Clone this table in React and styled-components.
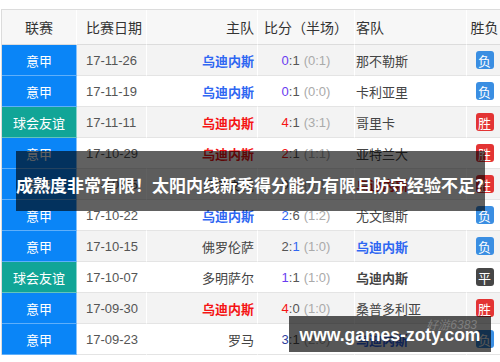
import React from 'react';
import styled, { createGlobalStyle } from 'styled-components';

const COLS = '75px 70px 111px 97px 112px 36px';

const COLORS = {
  serie: '#0a85f7',
  friendly: '#11a597',
  blue: '#2f67f2',
  red: '#f51414',
  purple: '#6a3cf0',
  navy: '#2f3f9e',
  gray: '#444'
};

const RESULT_BG = {
  '胜': '#e33434',
  '负': '#3a8ee2',
  '平': '#464646'
};

const matches = [
  { league: '意甲', date: '17-11-26', home: '乌迪内斯', homeColor: 'blue', score: [['0', 'purple'], [':1']], half: '(0:1)', away: '那不勒斯', result: '负' },
  { league: '意甲', date: '17-11-19', home: '乌迪内斯', homeColor: 'blue', score: [['0', 'purple'], [':1']], half: '(0:0)', away: '卡利亚里', result: '负' },
  { league: '球会友谊', date: '17-11-11', home: '乌迪内斯', homeColor: 'red', score: [['4', 'red'], [':1']], half: '(3:1)', away: '哥里卡', result: '胜' },
  { league: '意甲', date: '17-10-29', home: '乌迪内斯', homeColor: 'red', score: [['2', 'red'], [':1']], half: '(1:1)', away: '亚特兰大', result: '胜' },
  { league: '意甲', date: '17-10-25', home: '贝内文托', score: [['0:'], ['2', 'red']], half: '(0:1)', away: '乌迪内斯', awayColor: 'red', result: '胜' },
  { league: '意甲', date: '17-10-22', home: '乌迪内斯', homeColor: 'blue', score: [['2', 'blue'], [':6']], half: '(1:2)', away: '尤文图斯', result: '负' },
  { league: '意甲', date: '17-10-15', home: '佛罗伦萨', score: [['2:'], ['1', 'blue']], half: '(1:0)', away: '乌迪内斯', awayColor: 'blue', result: '负' },
  { league: '球会友谊', date: '17-10-07', home: '多明萨尔', score: [['1', 'purple'], [':1']], half: '(1:0)', away: '乌迪内斯', awayColor: 'gray', result: '平' },
  { league: '意甲', date: '17-09-30', home: '乌迪内斯', homeColor: 'red', score: [['4', 'red'], [':0']], half: '(1:0)', away: '桑普多利亚', result: '胜' },
  { league: '意甲', date: '17-09-23', home: '罗马', score: [['3', 'navy'], [':1']], half: '(2:0)', away: '乌迪内斯', awayColor: 'blue', result: '负' }
];

const GlobalStyle = createGlobalStyle`
  body {
    margin: 0;
    background: #fff;
    font-family: "Noto Sans CJK SC", "Noto Sans", sans-serif;
  }
`;

const Page = styled.div`
  position: relative;
  width: 500px;
  height: 362px;
  overflow: hidden;
  padding: 9px 0 0 1px;
  box-sizing: border-box;
`;

const Table = styled.div`
  display: flex;
  flex-direction: column;
  width: 502px;
  border-top: 1px solid #dcdcdc;
  border-left: 1px solid #dcdcdc;
`;

const HeaderRow = styled.div`
  display: grid;
  grid-template-columns: ${COLS};
  height: 35px;
  background: #f7f7f7;
`;

const Row = styled.div`
  display: grid;
  grid-template-columns: ${COLS};
  height: 31px;
  background: ${(p) => (p.$alt ? '#f3f3f3' : '#fff')};
`;

const Cell = styled.div`
  display: flex;
  align-items: center;
  justify-content: ${(p) => p.$align || 'center'};
  padding: 0 ${(p) => p.$pad || 0}px;
  border-right: 1px solid #fff;
  border-bottom: 1px solid #e4e4e4;
  font-size: 13px;
  color: #555;
  white-space: nowrap;
  overflow: hidden;
`;

const HeadCell = styled(Cell)`
  font-size: 14px;
  color: #333;
  border-bottom-color: #dcdcdc;
`;

const LeagueCell = styled(Cell)`
  background: ${(p) => COLORS[p.$kind]};
  color: #fff;
  border-bottom-color: rgba(255, 255, 255, 0.35);
  border-right-color: rgba(255, 255, 255, 0.5);
`;

const Team = styled.span`
  color: ${(p) => (p.$color ? COLORS[p.$color] : '#444')};
  font-weight: ${(p) => (p.$color ? 700 : 400)};
`;

const Score = styled.span`
  color: #555;
  font-family: "Liberation Sans", "Noto Sans", sans-serif;
  font-size: 13px;
`;

const Digit = styled.span`
  color: ${(p) => (p.$color ? COLORS[p.$color] : '#555')};
`;

const Half = styled.span`
  color: #aaa;
  margin-left: 4px;
`;

const DateText = styled.span`
  font-family: "Liberation Sans", "Noto Sans", sans-serif;
  color: #555;
`;

const Badge = styled.span`
  display: inline-flex;
  align-items: center;
  justify-content: center;
  width: 18px;
  height: 18px;
  border-radius: 3px;
  background: ${(p) => RESULT_BG[p.$result]};
  color: #fff;
  font-size: 13px;
`;

const Banner = styled.div`
  position: absolute;
  left: 16px;
  top: 151px;
  width: 469px;
  height: 60px;
  box-sizing: border-box;
  padding-top: 6px;
  background: rgba(0, 0, 0, 0.62);
  color: #fff;
  font-size: 17px;
  font-weight: 700;
  display: flex;
  align-items: center;
  white-space: nowrap;
`;

const Watermark = styled.div`
  position: absolute;
  left: 289px;
  top: 316px;
  width: 202px;
  height: 36px;
  background: rgba(0, 0, 0, 0.66);
  color: #fff;
  font-family: "Liberation Sans", sans-serif;
  font-weight: 700;
  font-size: 17.5px;
  display: flex;
  align-items: center;
  justify-content: center;
  padding-top: 3px;
  box-sizing: border-box;
`;

const Faint = styled.span`
  position: absolute;
  right: 14px;
  top: 1px;
  font-size: 12px;
  font-weight: 400;
  font-style: italic;
  color: rgba(255, 255, 255, 0.25);
`;

export default function App() {
  return (
    <Page>
      <GlobalStyle />
      <Table>
        <HeaderRow>
          <HeadCell>联赛</HeadCell>
          <HeadCell $align="flex-start" $pad={9}>比赛日期</HeadCell>
          <HeadCell $align="flex-end" $pad={3}>主队</HeadCell>
          <HeadCell>比分（半场）</HeadCell>
          <HeadCell $align="flex-start" $pad={1}>客队</HeadCell>
          <HeadCell>胜负</HeadCell>
        </HeaderRow>
        {matches.map((m, i) => (
          <Row key={m.date} $alt={i % 2 === 0}>
            <LeagueCell $kind={m.league === '意甲' ? 'serie' : 'friendly'}>{m.league}</LeagueCell>
            <Cell $align="flex-start" $pad={9}>
              <DateText>{m.date}</DateText>
            </Cell>
            <Cell $align="flex-end" $pad={3}>
              <Team $color={m.homeColor}>{m.home}</Team>
            </Cell>
            <Cell>
              <Score>
                {m.score.map(([txt, color], k) => (
                  <Digit key={k} $color={color}>{txt}</Digit>
                ))}
                <Half>{m.half}</Half>
              </Score>
            </Cell>
            <Cell $align="flex-start" $pad={1}>
              <Team $color={m.awayColor}>{m.away}</Team>
            </Cell>
            <Cell>
              <Badge $result={m.result}>{m.result}</Badge>
            </Cell>
          </Row>
        ))}
      </Table>
      <Banner>成熟度非常有限！太阳内线新秀得分能力有限且防守经验不足?</Banner>
      <Watermark>
        <Faint>好游6383</Faint>
        www.games-zoty.com
      </Watermark>
    </Page>
  );
}
